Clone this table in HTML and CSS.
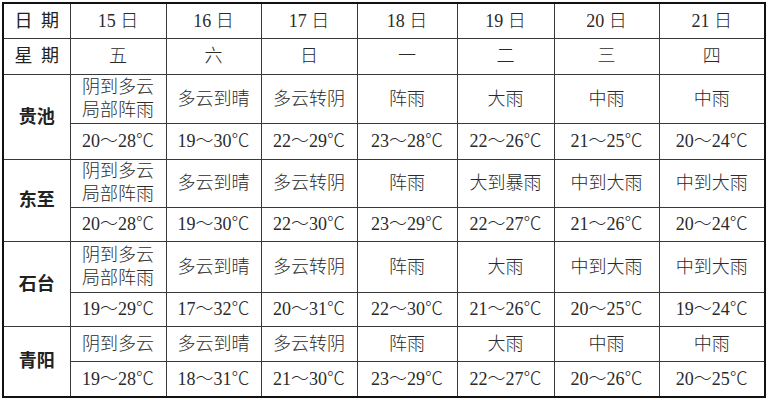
FILE: index.html
```html
<!DOCTYPE html>
<html lang="zh-CN">
<head>
<meta charset="utf-8">
<link rel="stylesheet" href="styles.css">
</head>
<body>
<div class="frame">
<table class="wx">
<colgroup>
<col class="c1"><col class="c2"><col class="c3"><col class="c4"><col class="c5"><col class="c6"><col class="c7"><col class="c8">
</colgroup>
<tr class="h34">
<td class="lab">日 期</td><td>15 日</td><td>16 日</td><td>17 日</td><td>18 日</td><td>19 日</td><td>20 日</td><td>21 日</td>
</tr>
<tr class="h36">
<td class="lab">星 期</td><td>五</td><td>六</td><td>日</td><td>一</td><td>二</td><td>三</td><td>四</td>
</tr>
<tr class="h49">
<td class="city" rowspan="2">贵池</td><td class="two">阴到多云<br>局部阵雨</td><td>多云到晴</td><td>多云转阴</td><td>阵雨</td><td>大雨</td><td>中雨</td><td>中雨</td>
</tr>
<tr class="h36">
<td>20～28℃</td><td>19～30℃</td><td>22～29℃</td><td>23～28℃</td><td>22～26℃</td><td>21～25℃</td><td>20～24℃</td>
</tr>
<tr class="h48">
<td class="city" rowspan="2">东至</td><td class="two">阴到多云<br>局部阵雨</td><td>多云到晴</td><td>多云转阴</td><td>阵雨</td><td>大到暴雨</td><td>中到大雨</td><td>中到大雨</td>
</tr>
<tr class="h34">
<td>20～28℃</td><td>19～30℃</td><td>22～30℃</td><td>23～29℃</td><td>22～27℃</td><td>21～26℃</td><td>20～24℃</td>
</tr>
<tr class="h51">
<td class="city" rowspan="2">石台</td><td class="two">阴到多云<br>局部阵雨</td><td>多云到晴</td><td>多云转阴</td><td>阵雨</td><td>大雨</td><td>中到大雨</td><td>中到大雨</td>
</tr>
<tr class="h34">
<td>19～29℃</td><td>17～32℃</td><td>20～31℃</td><td>22～30℃</td><td>21～26℃</td><td>20～25℃</td><td>19～24℃</td>
</tr>
<tr class="h35">
<td class="city" rowspan="2">青阳</td><td>阴到多云</td><td>多云到晴</td><td>多云转阴</td><td>阵雨</td><td>大雨</td><td>中雨</td><td>中雨</td>
</tr>
<tr class="h35">
<td>19～28℃</td><td>18～31℃</td><td>21～30℃</td><td>23～29℃</td><td>22～27℃</td><td>20～26℃</td><td>20～25℃</td>
</tr>
</table>
</div>
</body>
</html>
```
FILE: styles.css
```css
html, body {
  margin: 0;
  padding: 0;
  background: #ffffff;
}
body {
  padding: 2px 0 0 2px;
}
.frame {
  width: 760px;
  border: 2px solid #111111;
}
.wx {
  width: 760px;
  border-collapse: collapse;
  border-style: hidden;
  table-layout: fixed;
  font-family: "Liberation Serif", "Noto Sans CJK SC", serif;
  font-size: 18px;
  font-weight: 300;
  color: #2a2a2a;
}
.wx td {
  border: 1px solid #3a3a3a;
  padding: 0;
  text-align: center;
  vertical-align: middle;
  line-height: 22px;
  white-space: nowrap;
}
.c1 { width: 66px; }
.c2 { width: 96px; }
.c3 { width: 95px; }
.c4 { width: 96px; }
.c5 { width: 100px; }
.c6 { width: 97px; }
.c7 { width: 105px; }
.c8 { width: 105px; }
.h34 { height: 34px; }
.h35 { height: 35px; }
.h36 { height: 36px; }
.h48 { height: 48px; }
.h49 { height: 49px; }
.h51 { height: 51px; }
.wx td.lab {
  font-weight: 400;
  word-spacing: 4px;
  color: #222222;
}
.wx td.city {
  font-weight: 700;
  color: #222222;
}
.wx td.two {
  line-height: 23px;
}
```
